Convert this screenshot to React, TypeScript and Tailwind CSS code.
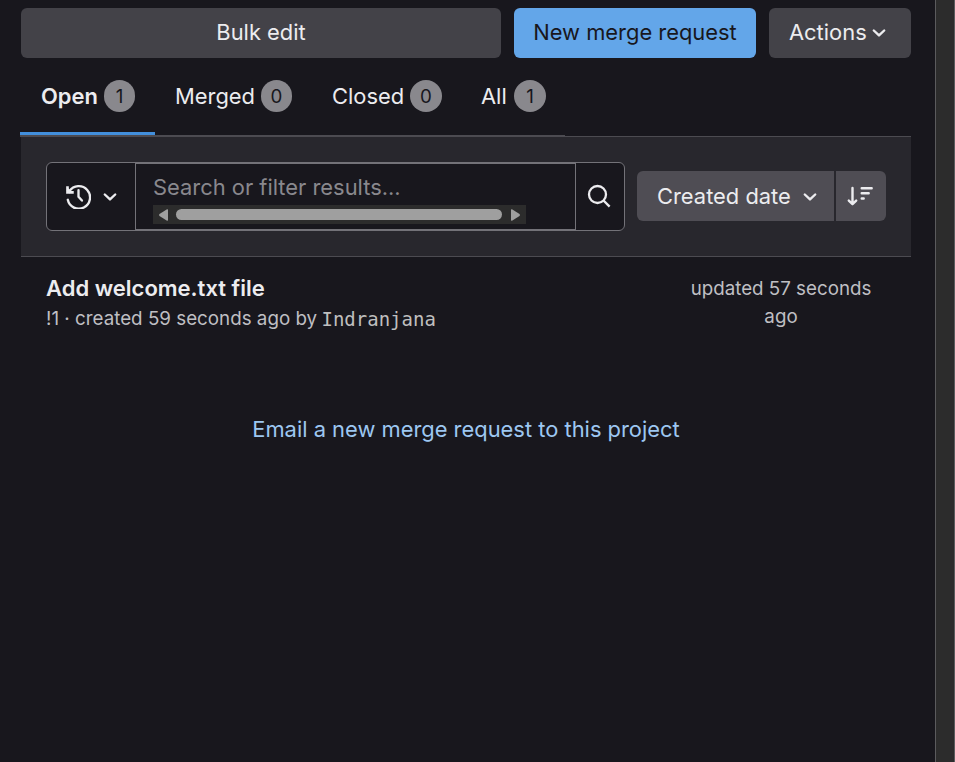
import React from 'react';

function Chevron({ className = '' }: { className?: string }) {
  return (
    <svg viewBox="0 0 14 10" className={`h-[10px] w-[14px] shrink-0 ${className}`} fill="none" stroke="currentColor" strokeWidth="2.4" strokeLinecap="round" strokeLinejoin="round">
      <path d="M1.8 2.5 7 7.4l5.2-4.9" />
    </svg>
  );
}

function HistoryIcon() {
  return (
    <svg viewBox="0 0 16 16" className="size-[25px] shrink-0" fill="none" stroke="currentColor" strokeWidth="1.5">
      <path d="M2.2 4.6A7.2 7.2 0 1 1 1.15 10.1" strokeLinecap="round" />
      <path d="M.95 1.5v3.9h4" strokeWidth="1.7" />
      <path d="M1 3.4 3 5.4" strokeWidth="1.7" />
      <path d="M8 4v4.1l2.2 2.5" strokeLinecap="round" strokeLinejoin="round" />
    </svg>
  );
}

function SearchIcon() {
  return (
    <svg viewBox="0 0 24 24" className="size-[24px] shrink-0" fill="none" stroke="currentColor" strokeWidth="2.3">
      <circle cx="10.5" cy="10.5" r="8.5" />
      <path d="m16.8 16.8 5 5" strokeLinecap="square" />
    </svg>
  );
}

function SortIcon() {
  return (
    <svg viewBox="0 0 26 22" className="h-[22px] w-[26px] shrink-0" fill="none" stroke="currentColor" strokeWidth="2.4" strokeLinecap="round" strokeLinejoin="round">
      <path d="M5.5 3v16M1.8 15.6l3.7 3.6 3.7-3.6M14.7 3.3h10M14.7 8.3h7M14.7 13.5h2" />
    </svg>
  );
}

function Tab({ label, count, className, badge = 'w-[32px]', active = false }: { label: string; count: number; className: string; badge?: string; active?: boolean }) {
  return (
    <button className={`flex h-[77px] items-start border-b-[3px] pt-[22px] ${active ? 'border-[#428fdc] font-semibold' : 'border-transparent'} ${className}`}>
      <span className="flex-1 text-left leading-[32px]">{label}</span>
      <span className={`flex h-[32px] items-center justify-center rounded-full bg-[#89888d] pt-[2px] text-[18.75px] font-normal text-[#18171d] ${badge}`}>{count}</span>
    </button>
  );
}

export default function App() {
  return (
    <div className="flex h-[762px] w-[955px] justify-between overflow-hidden bg-[#18171d] font-['Inter',sans-serif] text-[21.9px] text-[#ececef]">
      <main className="ml-[21px] w-[890px] pt-2">
        <div className="flex gap-[13px]">
          <button className="h-[50px] w-[480px] rounded-[6px] bg-[#434248] pb-px">Bulk edit</button>
          <button className="h-[50px] w-[242px] rounded-[6px] bg-[#63a6e9] pb-px whitespace-nowrap text-[#18171d]">New merge request</button>
          <button className="flex h-[50px] w-[142px] items-center rounded-[6px] bg-[#434248] pb-px pl-5">
            Actions
            <Chevron className="ml-[5px] mt-px" />
          </button>
        </div>

        <nav className="-ml-px flex h-[79px] w-[545px] border-b-2 border-[#4c4b51]">
          <Tab label="Open" count={1} active badge="w-[31px]" className="w-[135px] pl-[21px] pr-5" />
          <Tab label="Merged" count={0} badge="w-[31px]" className="w-[157px] pl-5 pr-5" />
          <Tab label="Closed" count={0} className="w-[150px] pl-5 pr-5" />
          <Tab label="All" count={1} className="w-[103px] pl-[19px] pr-[19px]" />
        </nav>

        <section className="-mt-px flex h-[121px] items-center justify-between border-y border-[#4c4b51] bg-[#28272d] px-[25px]">
          <div className="flex h-[69px] w-[579px] rounded-[6px] border border-[#737278] bg-[#18171d]">
            <button className="flex w-[88px] items-center pb-px pl-[19px]">
              <HistoryIcon />
              <Chevron className="ml-[12px] mt-px" />
            </button>
            <div className="w-[441px] border border-[#737278] pl-[17px] pt-[7px]">
              <div className="h-[34px] leading-[32px] text-[#89888d]">Search or filter results...</div>
              <div className="flex h-[19px] w-[373px] items-center bg-[#2c2c2c] pl-[6px] text-[#9f9f9f]">
                <svg viewBox="0 0 9 12" className="h-3 w-[9px]" fill="currentColor"><path d="M9 1v10q0 1-1 .7L.5 7Q-.3 6 .5 5L8 .3Q9 0 9 1Z" /></svg>
                <div className="ml-2 h-[11px] w-[326px] rounded-full bg-[#9f9f9f]" />
                <svg viewBox="0 0 9 12" className="ml-[9px] h-3 w-[9px]" fill="currentColor"><path d="M0 1v10q0 1 1 .7L8.5 7q.8-1 0-2L1 .3Q0 0 0 1Z" /></svg>
              </div>
            </div>
            <button className="flex flex-1 items-center justify-center pr-[2px] pb-px"><SearchIcon /></button>
          </div>
          <div className="-mt-px flex gap-[2px] self-start pt-[35px]">
            <button className="flex h-[50px] w-[197px] items-center rounded-l-[6px] bg-[#4f4d54] pt-px pl-5 whitespace-nowrap">
              Created date
              <Chevron className="ml-[12px]" />
            </button>
            <button className="flex h-[50px] w-[50px] items-center justify-center rounded-r-[6px] bg-[#4f4d54] pr-[2px]"><SortIcon /></button>
          </div>
        </section>

        <article className="flex justify-between px-[25px] pt-[15px]">
          <div>
            <h2 className="h-[32px] text-[22px] leading-[32px] font-semibold">Add welcome.txt file</h2>
            <p className="h-[28px] text-[18.8px] leading-[28px] whitespace-nowrap text-[#bfbfc3]">
              !1 · created 59 seconds ago by <span className="relative -left-px top-px font-['DejaVu_Sans_Mono',monospace] text-[19px] text-[#bfbfbf]">Indranjana</span>
            </p>
          </div>
          <p className="w-[210px] pt-[3px] text-center text-[18.75px] leading-[28px] text-[#bfbfc3]">updated 57 seconds ago</p>
        </article>

        <p className="mt-[81px] text-center leading-[32px] text-[#9dc7f1]">Email a new merge request to this project</p>
      </main>
      <aside className="w-5 border-x border-[#5b5b5d] bg-[#2c2c2c]" />
    </div>
  );
}
